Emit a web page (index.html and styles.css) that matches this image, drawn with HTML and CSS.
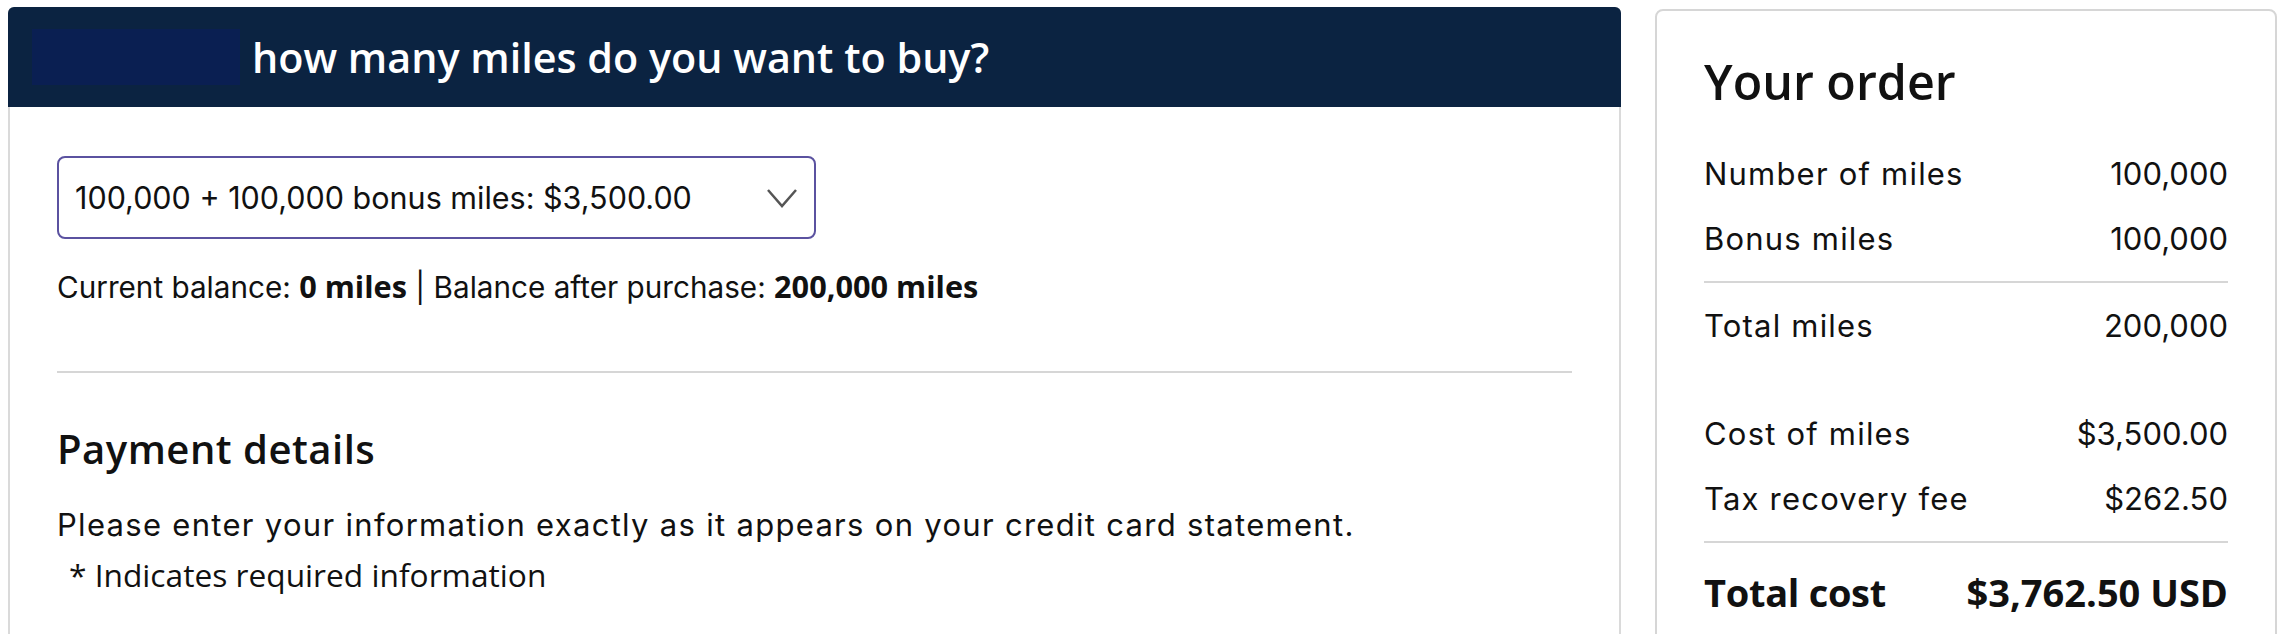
FILE: index.html
```html
<!DOCTYPE html>
<html lang="en">
<head>
    <meta charset="UTF-8">
    <title>Buy miles</title>
    <link rel="stylesheet" href="styles.css">
</head>
<body>
    <div class="page">
        <section class="purchase">
            <header class="purchase-header">
                <span class="brand-mark"></span>
                <h1>how many miles do you want to buy?</h1>
            </header>
            <div class="purchase-body">
                <div class="select-wrap">
                    <select class="miles-select">
                        <option>100,000 + 100,000 bonus miles: $3,500.00</option>
                    </select>
                    <svg class="chevron" width="32" height="20" viewBox="0 0 32 20"><polyline points="2,2 16,18 30,2" fill="none" stroke="#555" stroke-width="2.5"/></svg>
                </div>
                <p class="balance">Current balance: <strong>0 miles</strong> | Balance after purchase: <strong>200,000 miles</strong></p>
                <hr class="rule">
                <h2 class="section-title">Payment details</h2>
                <p class="intro">Please enter your information exactly as it appears on your credit card statement.</p>
                <p class="required">* Indicates required information</p>
            </div>
        </section>
        <aside class="order">
            <h2 class="order-title">Your order</h2>
            <div class="order-row"><span class="order-label">Number of miles</span><span>100,000</span></div>
            <div class="order-row"><span class="order-label">Bonus miles</span><span>100,000</span></div>
            <hr class="order-rule">
            <div class="order-row"><span class="order-label">Total miles</span><span>200,000</span></div>
            <div class="order-row spaced"><span class="order-label">Cost of miles</span><span>$3,500.00</span></div>
            <div class="order-row"><span class="order-label">Tax recovery fee</span><span>$262.50</span></div>
            <hr class="order-rule">
            <div class="order-total"><span class="total-label">Total cost</span><span>$3,762.50 USD</span></div>
        </aside>
    </div>
</body>
</html>
```

FILE: styles.css
```css
* {
    box-sizing: border-box;
}

body {
    margin: 0;
    background: white;
    color: #111;
    font-family: 'Open Sans', sans-serif;
}

.page {
    display: flex;
    align-items: flex-start;
    gap: 34px;
    padding: 7px 11px 0 8px;
}

.purchase {
    flex: 1;
    border: 2px solid #dadada;
    border-radius: 6px;
    min-height: 700px;
}

.purchase-header {
    display: flex;
    align-items: center;
    height: 100px;
    margin: -2px -2px 0;
    padding-left: 24px;
    background: #0b2341;
    border-radius: 6px 6px 0 0;
}

.brand-mark {
    width: 208px;
    height: 56px;
    background: #0a1f52;
}

.purchase-header h1 {
    margin: 0 0 0 12px;
    color: white;
    font-size: 41.3px;
    font-weight: 600;
}

.purchase-body {
    padding: 49px 47px 0;
}

.select-wrap {
    position: relative;
    width: 759px;
}

.miles-select {
    appearance: none;
    display: block;
    width: 100%;
    height: 83px;
    padding: 0 60px 0 16px;
    border: 2px solid #5b52a0;
    border-radius: 8px;
    background: white;
    color: #111;
    font-family: Inter, sans-serif;
    font-size: 30.5px;
}

.chevron {
    position: absolute;
    right: 18px;
    top: 32px;
    pointer-events: none;
}

.balance {
    margin: 24px 0 0;
    font-family: Inter, sans-serif;
    font-size: 29.7px;
    line-height: 46px;
}

.balance strong {
    font-family: 'Open Sans', sans-serif;
    font-weight: 700;
    font-size: 30.7px;
}

.rule {
    margin: 61px 0 0;
    border: 0;
    border-top: 2px solid #d6d6d6;
}

.section-title {
    margin: 52px 0 0;
    font-size: 40px;
    font-weight: 600;
    letter-spacing: 0.5px;
    line-height: 48px;
}

.intro {
    margin: 29px 0 0;
    font-family: Inter, sans-serif;
    font-size: 31px;
    letter-spacing: 1.3px;
    line-height: 46px;
}

.required {
    margin: 4px 0 0;
    padding-left: 12px;
    font-size: 31.7px;
    line-height: 46px;
}

.order {
    width: 622px;
    min-height: 700px;
    margin-top: 2px;
    padding: 41px 47px 0;
    border: 2px solid #d6d6d6;
    border-radius: 8px;
}

.order-title {
    margin: 0 0 31px;
    font-size: 48.4px;
    font-weight: 600;
    line-height: 1.2;
}

.order-row {
    display: flex;
    justify-content: space-between;
    font-family: Inter, sans-serif;
    font-size: 31px;
    line-height: 65px;
}

.order-label {
    letter-spacing: 1.2px;
}

.order-row.spaced {
    margin-top: 43px;
}

.order-rule {
    margin: 10px 0 10px;
    border: 0;
    border-top: 2px solid #d6d6d6;
}

.order-total {
    display: flex;
    justify-content: space-between;
    margin-top: 17px;
    font-size: 38px;
    font-weight: 700;
    line-height: 65px;
}

.total-label {
    letter-spacing: -0.3px;
}
```
